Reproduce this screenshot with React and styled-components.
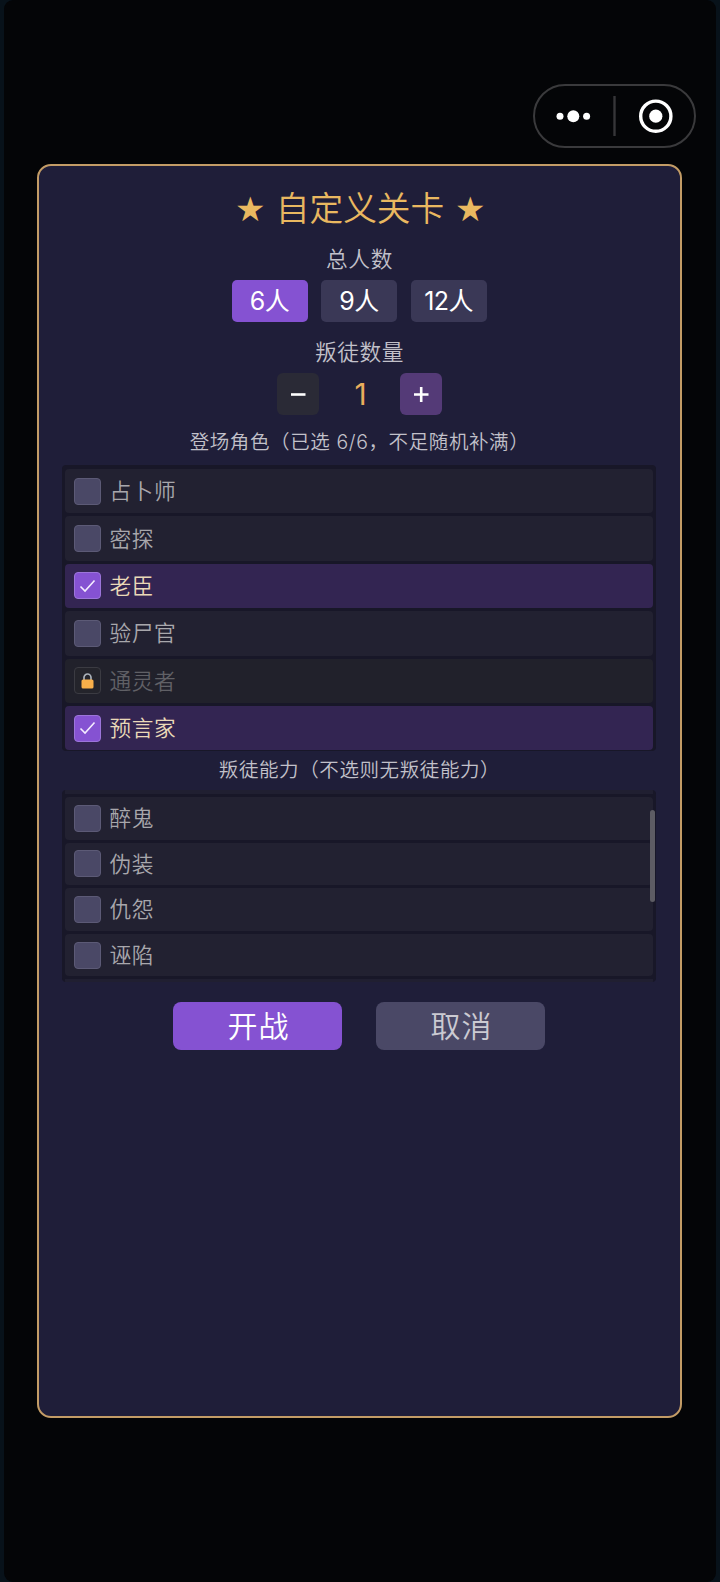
import React from 'react';
import styled, { createGlobalStyle } from 'styled-components';

const GlobalStyle = createGlobalStyle`
  * {
    box-sizing: border-box;
  }

  body {
    margin: 0;
    background-color: #08121a;
    font-family: Inter, 'Noto Sans CJK SC', sans-serif;
    font-weight: 350;
  }

  button {
    padding: 0;
    border: none;
    font-family: inherit;
    font-weight: inherit;
  }
`;

const Screen = styled.div`
  display: flex;
  flex-direction: column;
  width: 712px;
  height: 1582px;
  margin: 0 auto;
  padding: 84px 34px 0 33px;
  border-radius: 9px;
  background-color: #040507;
`;

const Capsule = styled.div`
  align-self: flex-end;
  display: flex;
  align-items: center;
  width: 163px;
  height: 64px;
  margin-right: -14px;
  border: 2px solid #3a3a3c;
  border-radius: 32px;

  svg {
    display: block;
  }
`;

const Dialog = styled.main`
  display: flex;
  flex-direction: column;
  align-items: center;
  width: 645px;
  height: 1254px;
  margin-top: 16px;
  padding: 21px 23.5px 0 22.5px;
  border: 2px solid #c39c66;
  border-radius: 14px;
  background-color: #1f1e39;
`;

const Title = styled.h1`
  display: flex;
  align-items: center;
  justify-content: center;
  gap: 11px;
  height: 44px;
  margin: 0 0 0 2px;
  color: #e9b860;
  font-size: 33.7px;
  font-weight: 350;
  line-height: 44px;
`;

const Star = styled.span`
  font-family: 'DejaVu Sans', sans-serif;
  font-size: 34px;
`;

const Label = styled.h2`
  height: 30px;
  margin: ${({ $top }) => $top}px 0 0;
  padding-left: 1px;
  color: #c2c1ca;
  font-size: ${({ $small }) => ($small ? '19.5px' : '21.7px')};
  font-weight: 350;
  letter-spacing: 0.6px;
  line-height: 30px;
  white-space: pre;
`;

const Options = styled.div`
  display: flex;
  gap: 13.5px;
  margin-top: 6px;
`;

const Option = styled.button`
  width: 76px;
  height: 42px;
  border-radius: 5px;
  background-color: ${({ $active }) => ($active ? '#8552d2' : '#3a3856')};
  color: #fff;
  font-size: 25px;
  font-weight: 400;
  letter-spacing: -0.6px;
  line-height: 43px;
`;

const Stepper = styled.div`
  display: flex;
  align-items: center;
  margin-top: 6px;
`;

const StepButton = styled.button`
  display: flex;
  align-items: center;
  justify-content: center;
  width: 42px;
  height: 42px;
  border-radius: 6px;
  background-color: ${({ $disabled }) => ($disabled ? '#2a2a36' : '#543a77')};
`;

const Count = styled.span`
  width: 81px;
  padding-left: 3px;
  color: #e9ae5c;
  font-size: 30px;
  font-weight: 400;
  line-height: 42px;
  text-align: center;
`;

const List = styled.ul`
  position: relative;
  display: flex;
  flex-direction: column;
  flex-shrink: 0;
  gap: 3px;
  width: 594px;
  height: ${({ $height }) => $height}px;
  margin: ${({ $top }) => $top}px 0 0;
  padding: ${({ $inset }) => $inset}px 3px 0;
  overflow: hidden;
  border-radius: 4px;
  background-color: #181728;
  list-style: none;
`;

const rowColors = {
  idle: { row: '#222131', text: '#a8a7ac' },
  checked: { row: '#332552', text: '#ead9b8' },
  locked: { row: '#21212b', text: '#606066' },
};

const Row = styled.li`
  display: flex;
  align-items: center;
  flex-shrink: 0;
  gap: 8.5px;
  height: ${({ $height }) => $height}px;
  padding-left: 9px;
  border-radius: 4px;
  background-color: ${({ $state }) => rowColors[$state].row};
  color: ${({ $state }) => rowColors[$state].text};
  font-size: 21.7px;
  letter-spacing: 0.6px;
  line-height: 30px;
`;

// sliver of the neighbouring row at the edge of a scrolled list
const RowEdge = styled.li`
  flex-shrink: 0;
  height: 4px;
  background-color: #201f31;
`;

const boxColors = {
  idle: { fill: '#4a4866', line: '#5c5a76' },
  checked: { fill: '#8552d2', line: '#9c75da' },
  locked: { fill: '#24242b', line: '#3b3b42' },
};

const Box = styled.span`
  display: flex;
  align-items: center;
  justify-content: center;
  width: 27px;
  height: 27px;
  border: 1px solid ${({ $state }) => boxColors[$state].line};
  border-radius: 4px;
  background-color: ${({ $state }) => boxColors[$state].fill};
`;

const ScrollThumb = styled.li`
  position: absolute;
  top: 20px;
  right: 1px;
  width: 5px;
  height: 92px;
  border-radius: 3px;
  background-color: #5d5c64;
`;

const Actions = styled.div`
  display: flex;
  gap: 34px;
  margin-top: 20px;
`;

const Action = styled.button`
  width: 169px;
  height: 48px;
  padding-left: 2px;
  border-radius: 8px;
  background-color: ${({ $primary }) => ($primary ? '#8552d2' : '#4a4866')};
  color: ${({ $primary }) => ($primary ? '#fff' : '#cbcad2')};
  font-size: 30px;
  letter-spacing: 1px;
  line-height: 48px;
`;

const roles = [
  { name: '占卜师', state: 'idle' },
  { name: '密探', state: 'idle' },
  { name: '老臣', state: 'checked' },
  { name: '验尸官', state: 'idle' },
  { name: '通灵者', state: 'locked' },
  { name: '预言家', state: 'checked' },
];

const abilities = ['醉鬼', '伪装', '仇怨', '诬陷'];

function CheckIcon() {
  return (
    <svg width="17" height="14" viewBox="0 0 17 14" fill="none">
      <path d="M1.5 7.5 L6 12 L15.5 1.5" stroke="#f4ecff" strokeWidth="1.6" />
    </svg>
  );
}

function LockIcon() {
  return (
    <svg width="13" height="16" viewBox="0 0 13 16" fill="none">
      <path
        d="M3 7 V4.5 a3.5 3.5 0 0 1 7 0 V7"
        stroke="#a9b0b8"
        strokeWidth="1.7"
      />
      <rect x="0.5" y="6.5" width="12" height="9" rx="1.6" fill="#f9b04a" />
    </svg>
  );
}

function CheckRow({ name, state, height }) {
  return (
    <Row $state={state} $height={height}>
      <Box $state={state}>
        {state === 'checked' && <CheckIcon />}
        {state === 'locked' && <LockIcon />}
      </Box>
      {name}
    </Row>
  );
}

export default function App() {
  return (
    <>
      <GlobalStyle />
      <Screen>
        <Capsule>
          <svg width="159" height="60" viewBox="0 0 159 60">
            <g fill="#fff">
              <circle cx="25" cy="30.2" r="3.5" />
              <circle cx="38.3" cy="30.2" r="6" />
              <circle cx="51.6" cy="30.2" r="3.5" />
              <circle cx="120.8" cy="30.2" r="6.6" />
            </g>
            <rect x="78.3" y="10" width="2.4" height="40" fill="#363638" />
            <circle
              cx="120.8"
              cy="30.2"
              r="15.1"
              fill="none"
              stroke="#fff"
              strokeWidth="3.4"
            />
          </svg>
        </Capsule>
        <Dialog>
          <Title>
            <Star>★</Star>
            自定义关卡
            <Star>★</Star>
          </Title>

          <Label $top={13}>总人数</Label>
          <Options>
            <Option $active>6人</Option>
            <Option>9人</Option>
            <Option>12人</Option>
          </Options>

          <Label $top={15}>叛徒数量</Label>
          <Stepper>
            <StepButton $disabled>
              <svg width="16" height="16" viewBox="0 0 16 16">
                <path d="M1 8.5 H15.5" stroke="#fff" strokeWidth="2.6" />
              </svg>
            </StepButton>
            <Count>1</Count>
            <StepButton>
              <svg width="16" height="16" viewBox="0 0 16 16">
                <path d="M1 8.5 H15.5 M8.2 1 V16" stroke="#fff" strokeWidth="2.6" />
              </svg>
            </StepButton>
          </Stepper>

          <Label $small $top={12}>
            登场角色（已选 6/6，不足随机补满）
          </Label>
          <List $height={286} $top={8} $inset={4}>
            {roles.map(({ name, state }) => (
              <CheckRow key={name} name={name} state={state} height={44.4} />
            ))}
          </List>

          <Label $small $top={4}>
            叛徒能力（不选则无叛徒能力）
          </Label>
          <List $height={192} $top={5} $inset={0}>
            <RowEdge />
            {abilities.map((name) => (
              <CheckRow key={name} name={name} state="idle" height={42.6} />
            ))}
            <RowEdge />
            <ScrollThumb />
          </List>

          <Actions>
            <Action $primary>开战</Action>
            <Action>取消</Action>
          </Actions>
        </Dialog>
      </Screen>
    </>
  );
}
